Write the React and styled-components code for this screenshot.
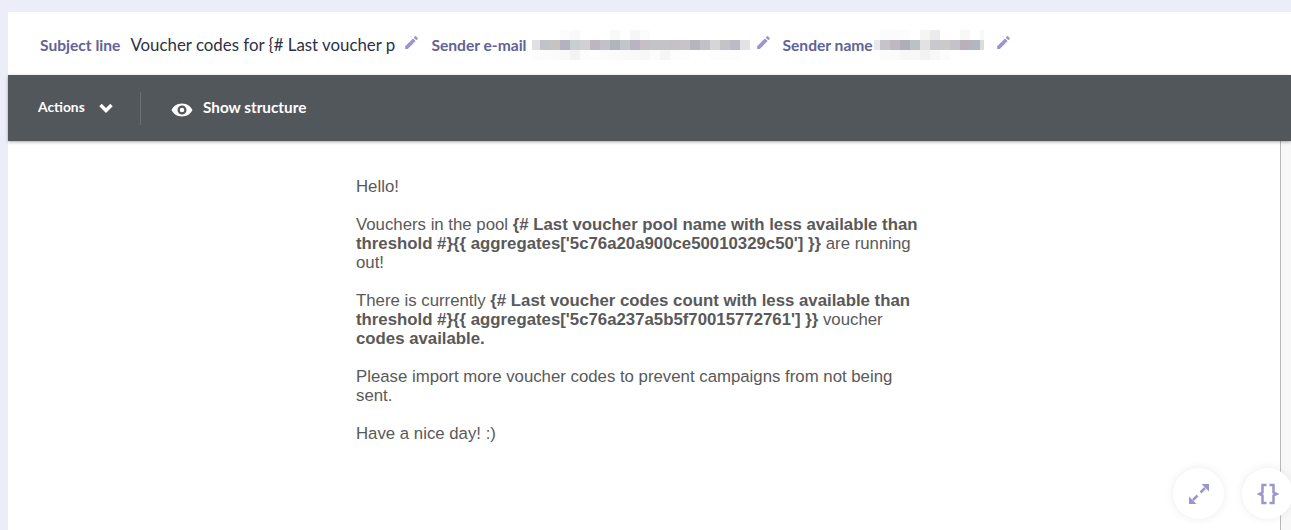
import React from 'react';
import styled, { createGlobalStyle } from 'styled-components';

const GlobalStyle = createGlobalStyle`
  html, body {
    margin: 0;
    padding: 0;
    height: 100%;
    overflow: hidden;
    background-color: #ebeef8;
  }
`

const Page = styled.div`
  height: 530px;
  padding: 12px 0 0 8px;
  box-sizing: border-box;
  display: flex;
  flex-direction: column;
  overflow: hidden;
`

const Header = styled.div`
  height: 63px;
  flex: none;
  box-sizing: border-box;
  background-color: #fff;
  display: flex;
  align-items: center;
  padding: 2px 0 0 32px;
  font-family: Lato, sans-serif;
`

const FieldLabel = styled.span`
  color: #5f6396;
  font-weight: 700;
  font-size: 15.6px;
  margin-right: ${p => p.$gap}px;
  white-space: nowrap;
`

const FieldValue = styled.span`
  width: 265px;
  flex: none;
  color: #2c3146;
  font-size: 16.85px;
  white-space: nowrap;
`

const Pencil = styled.svg`
  width: 17px;
  height: 17px;
  flex: none;
  margin: 0 ${p => p.$right}px 4px ${p => p.$left}px;
  fill: #9a96cd;
`

const Mosaic = styled.div`
  display: flex;
  flex-direction: column;
  width: ${p => p.$width}px;
  flex: none;
  overflow: hidden;
  margin-top: 1px;
`

const MosaicRow = styled.div`
  display: flex;
  height: 10px;
  margin-left: ${p => p.$offset}px;
`

const MosaicCell = styled.div`
  width: 10px;
  flex: none;
  background-color: ${p => p.$color};
`

const Toolbar = styled.div`
  height: 66px;
  flex: none;
  background-color: #52575b;
  display: flex;
  align-items: center;
  color: #fff;
  font-family: Lato, sans-serif;
  box-shadow: 0 1px 3px rgba(0, 0, 0, 0.35);
  position: relative;
  z-index: 1;
`

const ActionsButton = styled.div`
  width: 133px;
  height: 33px;
  padding: 0 0 3px 30px;
  box-sizing: border-box;
  display: flex;
  align-items: center;
  font-size: 13.8px;
  font-weight: 700;
  border-right: 1px solid #6b7074;
`

const Chevron = styled.svg`
  width: 14px;
  height: 10px;
  margin: 2px 0 0 14px;
  fill: none;
  stroke: #fff;
  stroke-width: 3.5;
`

const StructureButton = styled.div`
  display: flex;
  align-items: center;
  margin-left: 30px;
  padding-bottom: 2px;
  font-size: 15.3px;
  font-weight: 700;
`

const Eye = styled.svg`
  width: 22px;
  height: 16px;
  margin: 5px 10px 0 0;
  fill: #fff;
`

const Content = styled.div`
  flex: 1;
  display: flex;
  position: relative;
  background-color: #f8f8f8;
`

const Frame = styled.div`
  width: 1273px;
  flex: none;
  box-sizing: border-box;
  background-color: #fff;
  border-right: 1px solid #b9b9b9;
  padding: 36px 0 0 348px;
`

const Message = styled.div`
  width: 570px;
  font-family: "Liberation Sans", Arial, sans-serif;
  font-size: 16.8px;
  line-height: 19px;
  color: #595959;
`

const Para = styled.p`
  margin: 0 0 19px;
`

const Strong = styled.strong`
  font-weight: 700;
`

const FloatButtons = styled.div`
  position: absolute;
  left: 1165px;
  top: 327px;
  display: flex;
  gap: 18px;
`

const RoundButton = styled.div`
  width: 51px;
  height: 51px;
  border-radius: 50%;
  background-color: #fff;
  box-shadow: 0 0 10px rgba(0, 0, 0, 0.08);
  display: flex;
  align-items: center;
  justify-content: center;
  flex: none;
`

const FloatIcon = styled.svg`
  width: 22px;
  height: 22px;
  fill: none;
  stroke: #9a96cd;
  stroke-width: 2.5;
`

const ArrowHead = styled.path`
  fill: #9a96cd;
  stroke: none;
`

const PencilIcon = (props) => (
  <Pencil viewBox="0 0 24 24" {...props}>
    <path d="M3 17.25V21h3.75L17.81 9.94l-3.75-3.75L3 17.25zM20.71 7.04a1 1 0 0 0 0-1.41l-2.34-2.34a1 1 0 0 0-1.41 0l-1.83 1.83 3.75 3.75 1.83-1.83z" />
  </Pencil>
);

const emailMosaic = [
  ['#fff','#fff','#fff','#fcfcfc','#f9f9f9','#fff','#fff','#fff','#f9f9f9','#fff','#f6f6f6','#fcfcfc','#fff','#fff','#fff','#fff','#fff','#fff','#fff','#fff','#fff','#fff'],
  ['#e3e0e3','#c0c4c8','#c5c4c2','#b5b2bf','#c8ced2','#d3d0d4','#bdb5c0','#c3c0c8','#b0b5bb','#c2c6ca','#b9b4c2','#c6c0c6','#c4c3c8','#c4c3c8','#c4c1c7','#c7c3c9','#b6b5bc','#c1c1c8','#d6d6d8','#c4c4c6','#bcbac8','#e2e3e4'],
  ['#fdfdfd','#fcfcfc','#fbfbfb','#fafafa','#f3f3f3','#fcfcfc','#fdfdfd','#fcfcfc','#fbfbfb','#fafafa','#f9f9f9','#f7f7f7','#fcfcfc','#f6f6f6','#fcfcfc','#fdfdfd','#fff','#fff','#fdfdfd','#fdfdfd','#fdfdfd','#fff'],
];

const nameMosaic = [
  ['#fff','#fbfbfb','#fbfbfb','#fcfcfc','#fff','#f5f5f5','#ebebeb','#fff','#fff','#f8f8f8','#fff','#f8f8f8'],
  ['#e8e8ee','#c6c3c9','#bfb8c0','#aeaeb9','#bcc1c5','#e3e1e4','#c8c8ce','#cdc8ca','#c3c3c9','#b9b0bb','#b2b6c0','#dcdcdc'],
  ['#fff','#fbfbfb','#fbfbfb','#f8f8f8','#f8f8f8','#f2f2f2','#f8f8f8','#fcfcfc','#fff','#fff','#fff','#fff'],
];

const Redacted = ({ rows, width, offset }) => (
  <Mosaic $width={width}>
    {rows.map((row, r) => (
      <MosaicRow key={r} $offset={offset}>
        {row.map((c, i) => <MosaicCell key={i} $color={c} />)}
      </MosaicRow>
    ))}
  </Mosaic>
);

const App = () => {
  return (
    <Page>
      <GlobalStyle />
      <Header>
        <FieldLabel $gap={10}>Subject line</FieldLabel>
        <FieldValue>Voucher codes for {'{'}# Last voucher p</FieldValue>
        <PencilIcon $left={8} $right={11} />
        <FieldLabel $gap={6}>Sender e-mail</FieldLabel>
        <Redacted rows={emailMosaic} width={218} offset={-2} />
        <PencilIcon $left={5} $right={10} />
        <FieldLabel $gap={1}>Sender name</FieldLabel>
        <Redacted rows={nameMosaic} width={110} offset={-4} />
        <PencilIcon $left={11} $right={0} />
      </Header>
      <Toolbar>
        <ActionsButton>
          Actions
          <Chevron viewBox="0 0 14 10"><path d="M1.5 2 7 7.5 12.5 2" /></Chevron>
        </ActionsButton>
        <StructureButton>
          <Eye viewBox="0 0 22 16">
            <path fillRule="evenodd" d="M11 1.5C6.2 1.5 2.2 4.3.5 8c1.7 3.7 5.7 6.5 10.500 6.500s8.800-2.800 10.500-6.500C19.800 4.300 15.800 1.500 11 1.500zm0 11a4.500 4.500 0 1 1 0-9 4.500 4.500 0 0 1 0 9zm0-2.200a2.300 2.300 0 1 0 0-4.600 2.300 2.300 0 0 0 0 4.600z" />
          </Eye>
          Show structure
        </StructureButton>
      </Toolbar>
      <Content>
        <Frame>
          <Message>
            <Para>Hello!</Para>
            <Para>
              Vouchers in the pool <Strong>{"{# Last voucher pool name with less available than threshold #}{{ aggregates['5c76a20a900ce50010329c50'] }}"}</Strong> are running out!
            </Para>
            <Para>
              There is currently <Strong>{"{# Last voucher codes count with less available than threshold #}{{ aggregates['5c76a237a5b5f70015772761'] }}"}</Strong> voucher <Strong>codes available.</Strong>
            </Para>
            <Para>Please import more voucher codes to prevent campaigns from not being sent.</Para>
            <Para>Have a nice day! :)</Para>
          </Message>
        </Frame>
        <FloatButtons>
          <RoundButton>
            <FloatIcon viewBox="0 0 22 22">
              <path d="M17 5L12.500 9.500M5 17L9.500 12.500" />
              <ArrowHead d="M13.500 1H21V8.500ZM1 13.500V21H8.500Z" />
            </FloatIcon>
          </RoundButton>
          <RoundButton>
            <FloatIcon viewBox="0 0 22 22">
              <path d="M9.500 2H5.500V9.500L2.500 11L5.500 12.500V20H9.500M12.500 2H16.500V9.500L19.500 11L16.500 12.500V20H12.500" />
            </FloatIcon>
          </RoundButton>
        </FloatButtons>
      </Content>
    </Page>
  );
};

export default App;
